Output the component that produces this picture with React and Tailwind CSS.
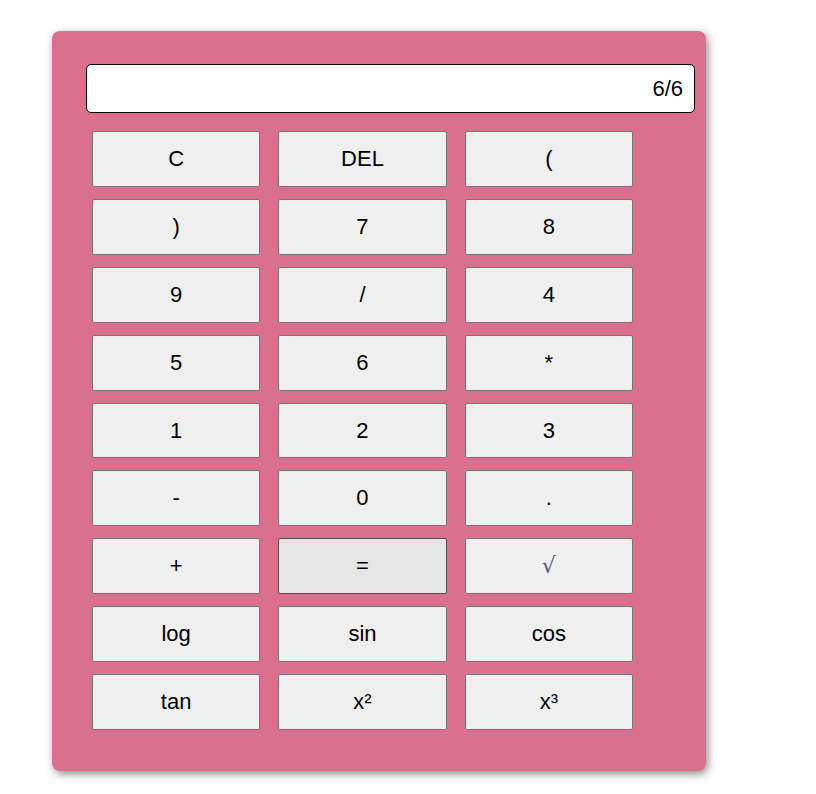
import React from 'react';

const keys = [
    'C', 'DEL', '(',
    ')', '7', '8',
    '9', '/', '4',
    '5', '6', '*',
    '1', '2', '3',
    '-', '0', '.',
    '+', '=', '√',
    'log', 'sin', 'cos',
    'tan', 'x²', 'x³',
];

const App = () => {
    return (
        <div className="min-h-screen bg-white pt-[31px] pl-[52px]" style={{ fontFamily: '"Liberation Sans", Arial, sans-serif' }}>
            {/* Calculator body */}
            <div className="w-[654px] rounded-lg bg-[#db6f8e] pt-[33px] pb-[41px] shadow-[2px_3px_8px_rgba(0,0,0,0.45)]">
                {/* Display */}
                <div className="ml-[34px] flex h-[49px] w-[609px] items-center justify-end rounded-[5px] border border-black bg-white pr-[11px] text-[22px] text-black">
                    6/6
                </div>

                {/* Keys */}
                <div className="ml-[40px] mt-[18px] grid w-[541px] grid-cols-3 gap-x-[18px] gap-y-[12px]">
                    {keys.map((k) => (
                        <button
                            key={k}
                            className={`flex h-[55.9px] items-center justify-center rounded-[2px] border pb-[1px] text-[22px] ${
                                k === '=' ? 'border-[#4f4f4f] bg-[#e5e5e5] text-black' : 'border-[#767676] bg-[#efefef] text-black'
                            }`}
                        >
                            {k === '√' ? (
                                <span className="text-[#4b5878]" style={{ fontFamily: '"DejaVu Serif", serif', fontWeight: 300 }}>√</span>
                            ) : (
                                k
                            )}
                        </button>
                    ))}
                </div>
            </div>
        </div>
    );
};

export default App;
